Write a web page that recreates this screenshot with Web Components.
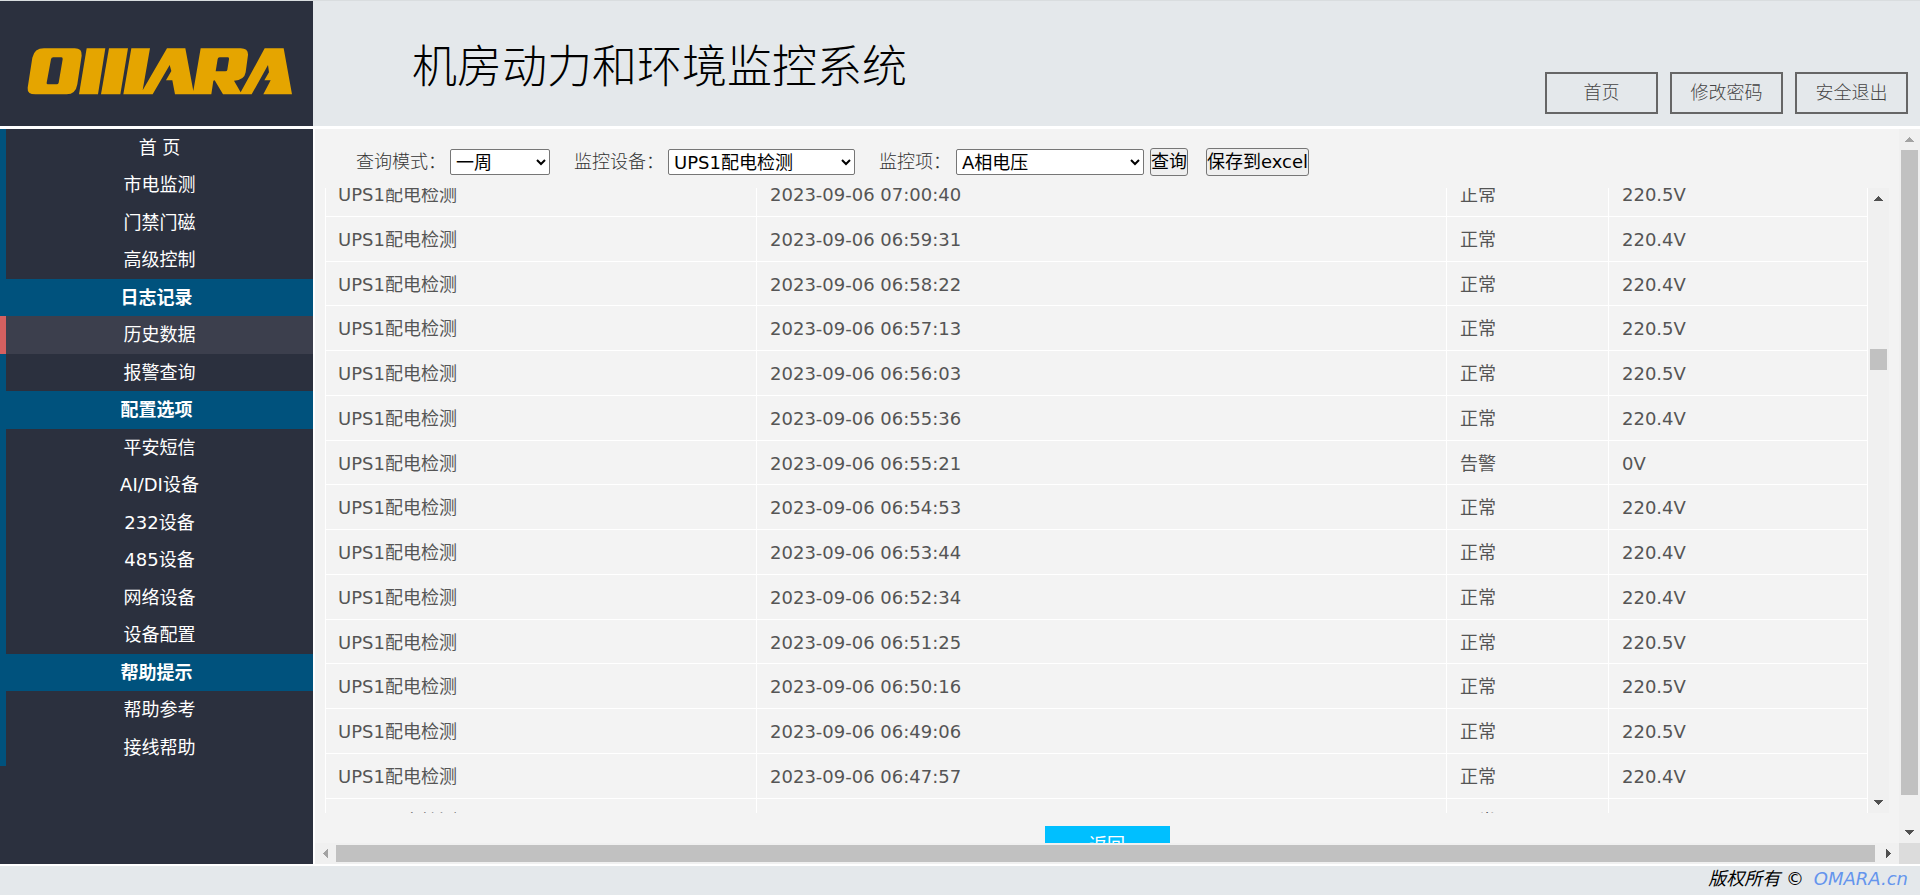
<!DOCTYPE html>
<html lang="zh-CN">
<head>
<meta charset="utf-8">
<title>机房动力和环境监控系统</title>
<style>
html, body { margin: 0; height: 100%; }
body { font: 18px/24px "DejaVu Sans", "Noto Sans CJK SC", sans-serif; background: #fff; overflow: hidden; }
</style>
</head>
<body>
<app-shell>
  <page-header slot="header" heading="机房动力和环境监控系统">
    <brand-logo slot="logo"></brand-logo>
    <header-button>首页</header-button>
    <header-button>修改密码</header-button>
    <header-button>安全退出</header-button>
  </page-header>
  <nav-menu slot="nav">
    <nav-item>首 页</nav-item>
    <nav-item>市电监测</nav-item>
    <nav-item>门禁门磁</nav-item>
    <nav-item>高级控制</nav-item>
    <nav-heading>日志记录</nav-heading>
    <nav-item active>历史数据</nav-item>
    <nav-item>报警查询</nav-item>
    <nav-heading>配置选项</nav-heading>
    <nav-item>平安短信</nav-item>
    <nav-item>AI/DI设备</nav-item>
    <nav-item>232设备</nav-item>
    <nav-item>485设备</nav-item>
    <nav-item>网络设备</nav-item>
    <nav-item>设备配置</nav-item>
    <nav-heading>帮助提示</nav-heading>
    <nav-item>帮助参考</nav-item>
    <nav-item>接线帮助</nav-item>
  </nav-menu>
  <history-panel slot="content"></history-panel>
  <page-footer slot="footer"></page-footer>
</app-shell>

<script>
const define = (name, html, setup) => {
  const template = document.createElement('template');
  template.innerHTML = html;
  customElements.define(name, class extends HTMLElement {
    constructor() {
      super();
      this.attachShadow({ mode: 'open' }).append(template.content.cloneNode(true));
    }
    connectedCallback() { if (setup) setup.call(this, this.shadowRoot); }
  });
};

define('app-shell', `
<style>
:host { display: grid; box-sizing: border-box; height: 100vh; border-top: 1px solid #d9dddf;
  grid-template: auto minmax(0, 1fr) auto / 313px minmax(0, 1fr); }
slot { display: block; min-width: 0; min-height: 0; }
.header, .footer { grid-column: 1 / -1; }
.header { border-bottom: 3px solid #fff; }
.nav { background: #2b303e; display: grid; align-content: start; }
.content { margin-left: 2px; display: grid; }
.footer { border-top: 2px solid #fff; }
</style>
<slot class="header" name="header"></slot>
<slot class="nav" name="nav"></slot>
<slot class="content" name="content"></slot>
<slot class="footer" name="footer"></slot>`);

define('page-header', `
<style>
:host { display: grid; grid-template-columns: 313px 1fr auto; min-height: 125px; background: #e4e8eb; }
.logo { background: #2b303e; display: grid; place-items: center; }
h1 { margin: 0; align-self: center; padding: 0 0 0 99px; font-size: 45px; line-height: 60px; font-weight: 300;
  font-family: "Noto Sans CJK SC", sans-serif; color: #000; }
nav { display: flex; gap: 12px; align-items: flex-end; padding: 12px; }
</style>
<div class="logo"><slot name="logo"></slot></div>
<h1></h1>
<nav><slot></slot></nav>`, function (root) {
  root.querySelector('h1').textContent = this.getAttribute('heading');
});

define('brand-logo', `
<style>:host { display: block; padding-left: 6px; padding-top: 16px; } svg { display: block; }</style>
<svg width="266" height="47" viewBox="82 143 796 141" fill="#e5a500" fill-rule="evenodd" role="img" aria-label="OMARA">
<path d="M132 144H224Q247 144 245 166L232 252Q227 282 200 282H106Q81 282 83 262L97 172Q103 144 132 144ZM160 171Q154 171 153 177L140 247Q139 252 144 252H170Q175 252 176 247L188 177Q189 171 184 171Z"/>
<path d="M260 144H316L294 282H237Z"/><path d="M327 144H384L361 282H303Z"/>
<path d="M394 144H450L428 270L501 144H556L580 272L602 144H722Q745 144 744 164L737 216Q733 240 702 241L722 276L794 144H851L876 282H790L812 240H793L807 216L804 194L755 282H669L644 240L640 241L634 282H525L517 240H498L514 212L509 194L458 282H370ZM659 171Q654 171 653 176L647 213H676Q681 213 682 208L687 177Q688 171 683 171Z"/>
</svg>`);

define('header-button', `
<style>
:host { display: block; }
button { width: 113px; height: 42px; padding: 0; border: 2px solid #666; background: transparent;
  font: inherit; font-weight: 300; color: #444; cursor: pointer; }
</style>
<button type="button"><slot></slot></button>`);

define('nav-menu', `
<style>
:host { display: block; color: #fff; text-align: center; }
::slotted(*) { height: 37px; }
::slotted(:nth-child(even)) { height: 38px; }
</style>
<nav><slot></slot></nav>`);

define('nav-item', `
<style>
:host { display: block; }
a { display: grid; place-items: center; box-sizing: border-box; height: 100%; border-left: 6px solid #00527d;
  color: inherit; text-decoration: none; }
:host([active]) a { border-color: #d46060; background: #3c3f4d; }
</style>
<a href="#"><span><slot></slot></span></a>`);

define('nav-heading', `
<style>
:host { display: grid; place-items: center; background: #00527d; font-weight: 700; }
</style>
<span><slot></slot></span>`);

define('scroll-bar', `
<style>
:host { display: flex; flex-direction: column; width: 21px; background: #f0f0f0; color: #505050; }
:host([horizontal]) { flex-direction: row; width: auto; height: 21px; }
button { flex: none; width: 21px; height: 21px; padding: 0; border: 0; background: none; display: grid; place-items: center; color: inherit; }
:host([at-start]) .prev { color: #a3a3a3; }
.thumb { background: #c1c1c1; margin: 0 2px; }
:host([horizontal]) .thumb { margin: 2px 0; }
:host([horizontal]) svg { transform: rotate(-90deg); }
svg { display: block; }
</style>
<button class="prev" type="button" aria-label="向前滚动"><svg width="9" height="5" viewBox="0 0 9 5" fill="currentColor" shape-rendering="crispEdges"><path d="M4 0h1v1h1v1h1v1h1v1h1v1H0V4h1V3h1V2h1V1h1z"/></svg></button>
<div class="before"></div><div class="thumb"></div><div class="after"></div>
<button class="next" type="button" aria-label="向后滚动"><svg width="9" height="5" viewBox="0 0 9 5" fill="currentColor" shape-rendering="crispEdges"><path d="M0 0h9v1H8v1H7v1H6v1H5v1H4V4H3V3H2V2H1V1H0z"/></svg></button>`,
function (root) {
  const parts = this.getAttribute('parts').split(' ');
  ['before', 'thumb', 'after'].forEach((name, i) => {
    root.querySelector('.' + name).style.flex = parts[i] + ' 1 0';
  });
});

define('query-toolbar', `
<style>
:host { display: flex; align-items: center; height: 59px; box-sizing: border-box; padding: 7px 0 0 41px; color: #333; }
label { width: 94px; white-space: nowrap; font-weight: 300; }
label.short { width: 77px; }
select, button { font: inherit; color: #000; box-sizing: border-box; border: 1px solid #767676; }
select { height: 26px; padding: 0 2px 0 1px; background: #fff; border-radius: 2px; margin-right: 24px; }
.mode { width: 100px; }
.device { width: 187px; }
.metric { width: 188px; margin-right: 6px; }
button { height: 28px; padding: 0; line-height: 24px; background: #efefef; border-radius: 3px; margin-right: 18px; }
</style>
<label for="mode">查询模式：</label>
<select class="mode" id="mode"><option>一周</option></select>
<label for="device">监控设备：</label>
<select class="device" id="device"><option>UPS1配电检测</option></select>
<label class="short" for="metric">监控项：</label>
<select class="metric" id="metric"><option>A相电压</option></select>
<button type="button">查询</button>
<button type="button">保存到excel</button>`);

define('record-table', `
<style>
:host { display: flex; min-height: 0; color: #555; }
.rows { flex: 1; overflow: hidden; }
table { width: 100%; table-layout: fixed; border-collapse: separate; border-spacing: 0; }
td { height: 42px; padding: 2px 0 0 13px; border-bottom: 1px solid #fff; border-right: 1px solid #fff; }
tr:nth-child(4n + 3) td { height: 41px; }
td:first-child { border-left: 1px solid #fff; padding-left: 12px; }
.name { width: 28%; }
.state { width: 162px; }
.value { width: 259px; }
</style>
<div class="rows"><table>
<colgroup><col class="name"><col><col class="state"><col class="value"></colgroup>
<tbody></tbody></table></div>
<scroll-bar parts="140 21 422"></scroll-bar>`, function (root) {
  const records = [
    ['07:00:40', '正常', '220.5V'], ['06:59:31', '正常', '220.4V'], ['06:58:22', '正常', '220.4V'],
    ['06:57:13', '正常', '220.5V'], ['06:56:03', '正常', '220.5V'], ['06:55:36', '正常', '220.4V'],
    ['06:55:21', '告警', '0V'], ['06:54:53', '正常', '220.4V'], ['06:53:44', '正常', '220.4V'],
    ['06:52:34', '正常', '220.4V'], ['06:51:25', '正常', '220.5V'], ['06:50:16', '正常', '220.5V'],
    ['06:49:06', '正常', '220.5V'], ['06:47:57', '正常', '220.4V'], ['06:46:48', '正常', '220.4V']
  ];
  const body = root.querySelector('tbody');
  for (const [time, state, value] of records) {
    const row = body.insertRow();
    for (const text of ['UPS1配电检测', '2023-09-06 ' + time, state, value]) row.insertCell().textContent = text;
  }
  root.querySelector('.rows').scrollTop = 16;
});

define('history-panel', `
<style>
:host { display: grid; min-height: 0; min-width: 0; background: #f3f3f3;
  grid-template: minmax(0, 1fr) 21px / minmax(0, 1fr) 21px; }
main { display: flex; flex-direction: column; min-height: 0; overflow: hidden; }
record-table { flex: 1; margin: 0 10px; }
.actions { flex: none; height: 30px; box-sizing: border-box; padding-top: 13px; overflow: hidden; text-align: center; }
.actions button { width: 125px; height: 38px; padding: 0; border: 0; background: #00bfff; color: #fff; font: inherit; }
.corner { background: #dcdcdc; }
</style>
<main>
<query-toolbar></query-toolbar>
<record-table></record-table>
<div class="actions"><button type="button">返回</button></div>
</main>
<scroll-bar at-start parts="0 645 27"></scroll-bar>
<scroll-bar horizontal at-start parts="0 1539 3"></scroll-bar>
<div class="corner"></div>`);

define('page-footer', `
<style>
:host { display: block; height: 29px; box-sizing: border-box; padding: 1px 12px 0 0; background: #e4e8eb;
  font-style: italic; text-align: right; color: #000; }
a { color: #6495ed; text-decoration: none; margin-left: 4px; }
</style>
版权所有 © <a href="#">OMARA.cn</a>`);
</script>
</body>
</html>
